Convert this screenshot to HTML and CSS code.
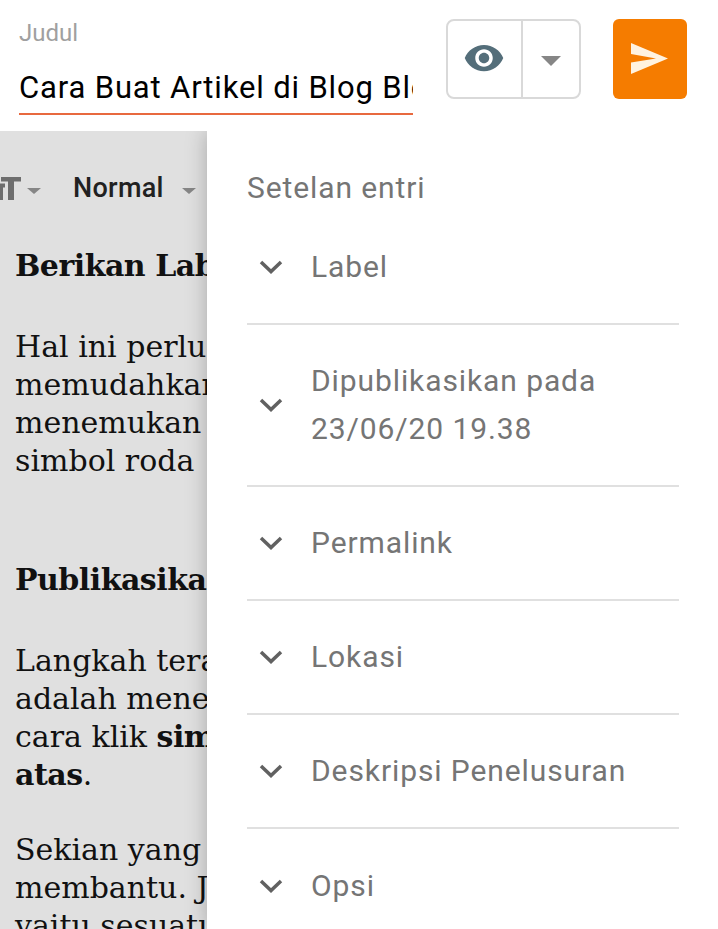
FILE: index.html
```html
<!DOCTYPE html>
<html lang="en">
<head>
    <meta charset="UTF-8">
    <meta name="viewport" content="width=device-width, initial-scale=1.0">
    <link rel="stylesheet" href="styles.css">
    <title>Setelan entri</title>
</head>
<body>
    <header class="topbar">
        <div class="title-field">
            <label class="title-label" for="title">Judul</label>
            <div class="title-value" id="title">Cara Buat Artikel di Blog Blogger</div>
        </div>
        <div class="preview-group">
            <button class="preview-btn" type="button">
                <svg class="eye-icon" viewBox="0 0 24 24"><path d="M12 4.5C7 4.5 2.73 7.61 1 12c1.73 4.39 6 7.5 11 7.5s9.27-3.11 11-7.5c-1.73-4.39-6-7.5-11-7.5zM12 17c-2.76 0-5-2.24-5-5s2.24-5 5-5 5 2.24 5 5-2.24 5-5 5zm0-8c-1.66 0-3 1.34-3 3s1.34 3 3 3 3-1.34 3-3-1.34-3-3-3z"/></svg>
            </button>
            <button class="preview-menu" type="button"><span class="caret caret-large"></span></button>
        </div>
        <button class="publish-btn" type="button">
            <svg class="send-icon" viewBox="0 0 38 32"><polygon points="0,0 37,15.5 0,31 0,19.5 25,15.5 0,11"/></svg>
        </button>
    </header>

    <main class="workspace">
        <section class="editor">
            <div class="toolbar">
                <svg class="font-icon" viewBox="0 0 22 24"><path d="M1 1h20v4.5h-7V24H8V5.500H1zM-4 7.500h9v4H3V24H-1V11.500h-3z"/></svg>
                <span class="caret caret-small"></span>
                <span class="toolbar-format">Normal</span>
                <span class="caret caret-small"></span>
            </div>
            <div class="post-body">
                <p><b>Berikan Label</b></p>
                <p>Hal ini perlu<br>memudahkan<br>menemukan<br>simbol roda</p>
                <p class="section-gap"><b>Publikasikan</b></p>
                <p class="tight">Langkah terakhir<br>adalah menerbitkan<br>cara klik <b>simbol</b><br><b>atas</b>.</p>
                <p>Sekian yang<br>membantu. Jika<br>yaitu sesuatu</p>
            </div>
        </section>

        <aside class="settings">
            <h2 class="settings-title">Setelan entri</h2>
            <ul class="settings-list">
                <li class="settings-row">
                    <svg class="chevron" viewBox="0 0 24 14"><polyline points="2,2 12,11.500 22,2"/></svg>
                    <span>Label</span>
                </li>
                <li class="settings-row settings-row-tall">
                    <svg class="chevron" viewBox="0 0 24 14"><polyline points="2,2 12,11.500 22,2"/></svg>
                    <span>Dipublikasikan pada<br>23/06/20 19.38</span>
                </li>
                <li class="settings-row">
                    <svg class="chevron" viewBox="0 0 24 14"><polyline points="2,2 12,11.500 22,2"/></svg>
                    <span>Permalink</span>
                </li>
                <li class="settings-row">
                    <svg class="chevron" viewBox="0 0 24 14"><polyline points="2,2 12,11.500 22,2"/></svg>
                    <span>Lokasi</span>
                </li>
                <li class="settings-row">
                    <svg class="chevron" viewBox="0 0 24 14"><polyline points="2,2 12,11.500 22,2"/></svg>
                    <span>Deskripsi Penelusuran</span>
                </li>
                <li class="settings-row">
                    <svg class="chevron" viewBox="0 0 24 14"><polyline points="2,2 12,11.500 22,2"/></svg>
                    <span>Opsi</span>
                </li>
            </ul>
        </aside>
    </main>
</body>
</html>
```

FILE: styles.css
```css
html, body {
    height: 100%;
}

body {
    margin: 0;
    font-family: Roboto, "Liberation Sans", sans-serif;
    background-color: white;
    overflow: hidden;
}

.topbar {
    display: flex;
    align-items: flex-start;
    height: 131px;
    box-sizing: border-box;
    padding: 19px 31px 0 19px;
}

.title-field {
    width: 394px;
    flex-shrink: 0;
    margin-right: 33px;
}

.title-label {
    display: block;
    height: 28px;
    line-height: 28px;
    font-size: 24px;
    color: #a0a0a0;
}

.title-value {
    height: 47px;
    margin-top: 21px;
    box-sizing: border-box;
    line-height: 39px;
    font-size: 31px;
    letter-spacing: 0.85px;
    color: black;
    white-space: nowrap;
    overflow: hidden;
    border-bottom: 2px solid #e8693f;
}

.preview-group {
    display: flex;
    flex-shrink: 0;
    height: 80px;
    margin-right: 32px;
    box-sizing: border-box;
    border: 2px solid #d9d9d9;
    border-radius: 8px;
}

.preview-group button {
    display: flex;
    align-items: center;
    justify-content: center;
    padding: 0;
    border: none;
    background: none;
}

.preview-group .preview-btn {
    width: 75px;
    height: 76px;
    padding: 0 1px 3px 0;
    border-right: 2px solid #d9d9d9;
}

.preview-menu {
    width: 56px;
    height: 76px;
}

.eye-icon {
    width: 42px;
    height: 42px;
    fill: #546e7a;
}

.caret {
    display: inline-block;
    width: 0;
    height: 0;
    border-style: solid;
    border-color: #868686 transparent transparent transparent;
}

.caret-large {
    border-width: 10px 10px 0 10px;
    margin-top: 4px;
}

.caret-small {
    border-width: 6px 7px 0 7px;
    margin-top: 6px;
}

.publish-btn {
    display: flex;
    align-items: center;
    justify-content: center;
    flex-shrink: 0;
    width: 74px;
    height: 80px;
    padding: 0;
    border: none;
    border-radius: 6px;
    background-color: #f57c00;
}

.send-icon {
    width: 38px;
    height: 32px;
    fill: #fff3e0;
}

.workspace {
    display: flex;
    height: 798px;
}

.editor {
    width: 207px;
    flex-shrink: 0;
    background-color: #e0e0e0;
    overflow: hidden;
}

.toolbar {
    display: flex;
    align-items: center;
    height: 114px;
    font-size: 27px;
    letter-spacing: 0.3px;
}

.font-icon {
    width: 22px;
    height: 24px;
    flex-shrink: 0;
    fill: #6e6e6e;
}

.toolbar .font-icon + .caret {
    margin-left: 5px;
}

.toolbar-format {
    margin-left: 32px;
    margin-right: 18px;
    font-weight: 500;
    color: #212121;
}

.post-body {
    padding: 2px 0 0 15px;
    font-family: "DejaVu Serif", serif;
    font-size: 30px;
    line-height: 38px;
    color: #111;
    white-space: nowrap;
}

.post-body b {
    letter-spacing: -0.5px;
}

.post-body p {
    margin: 0 0 43px;
}

.post-body .section-gap {
    margin-top: 81px;
}

.post-body .tight {
    margin-bottom: 37px;
}

.settings {
    position: relative;
    flex: 1;
    background-color: white;
    box-shadow: 0 0 20px rgba(0, 0, 0, 0.25);
    padding: 40px 39px 0 40px;
    clip-path: inset(0 0 0 -40px);
}

.settings-title {
    margin: 0;
    height: 40px;
    line-height: 34px;
    font-size: 30px;
    font-weight: 400;
    letter-spacing: 0.9px;
    color: #757575;
}

.settings-list {
    margin: 0;
    padding: 0;
    list-style: none;
}

.settings-row {
    display: flex;
    align-items: center;
    height: 114px;
    box-sizing: border-box;
    border-bottom: 2px solid #e0e0e0;
    font-size: 30px;
    line-height: 48px;
    letter-spacing: 0.9px;
    color: #757575;
}

.settings-row:last-child {
    border-bottom: none;
}

.settings-row-tall {
    height: 162px;
}

.chevron {
    width: 24px;
    height: 14px;
    margin: 0 28px 0 12px;
    flex-shrink: 0;
    fill: none;
    stroke: #616161;
    stroke-width: 3.5;
}
```
